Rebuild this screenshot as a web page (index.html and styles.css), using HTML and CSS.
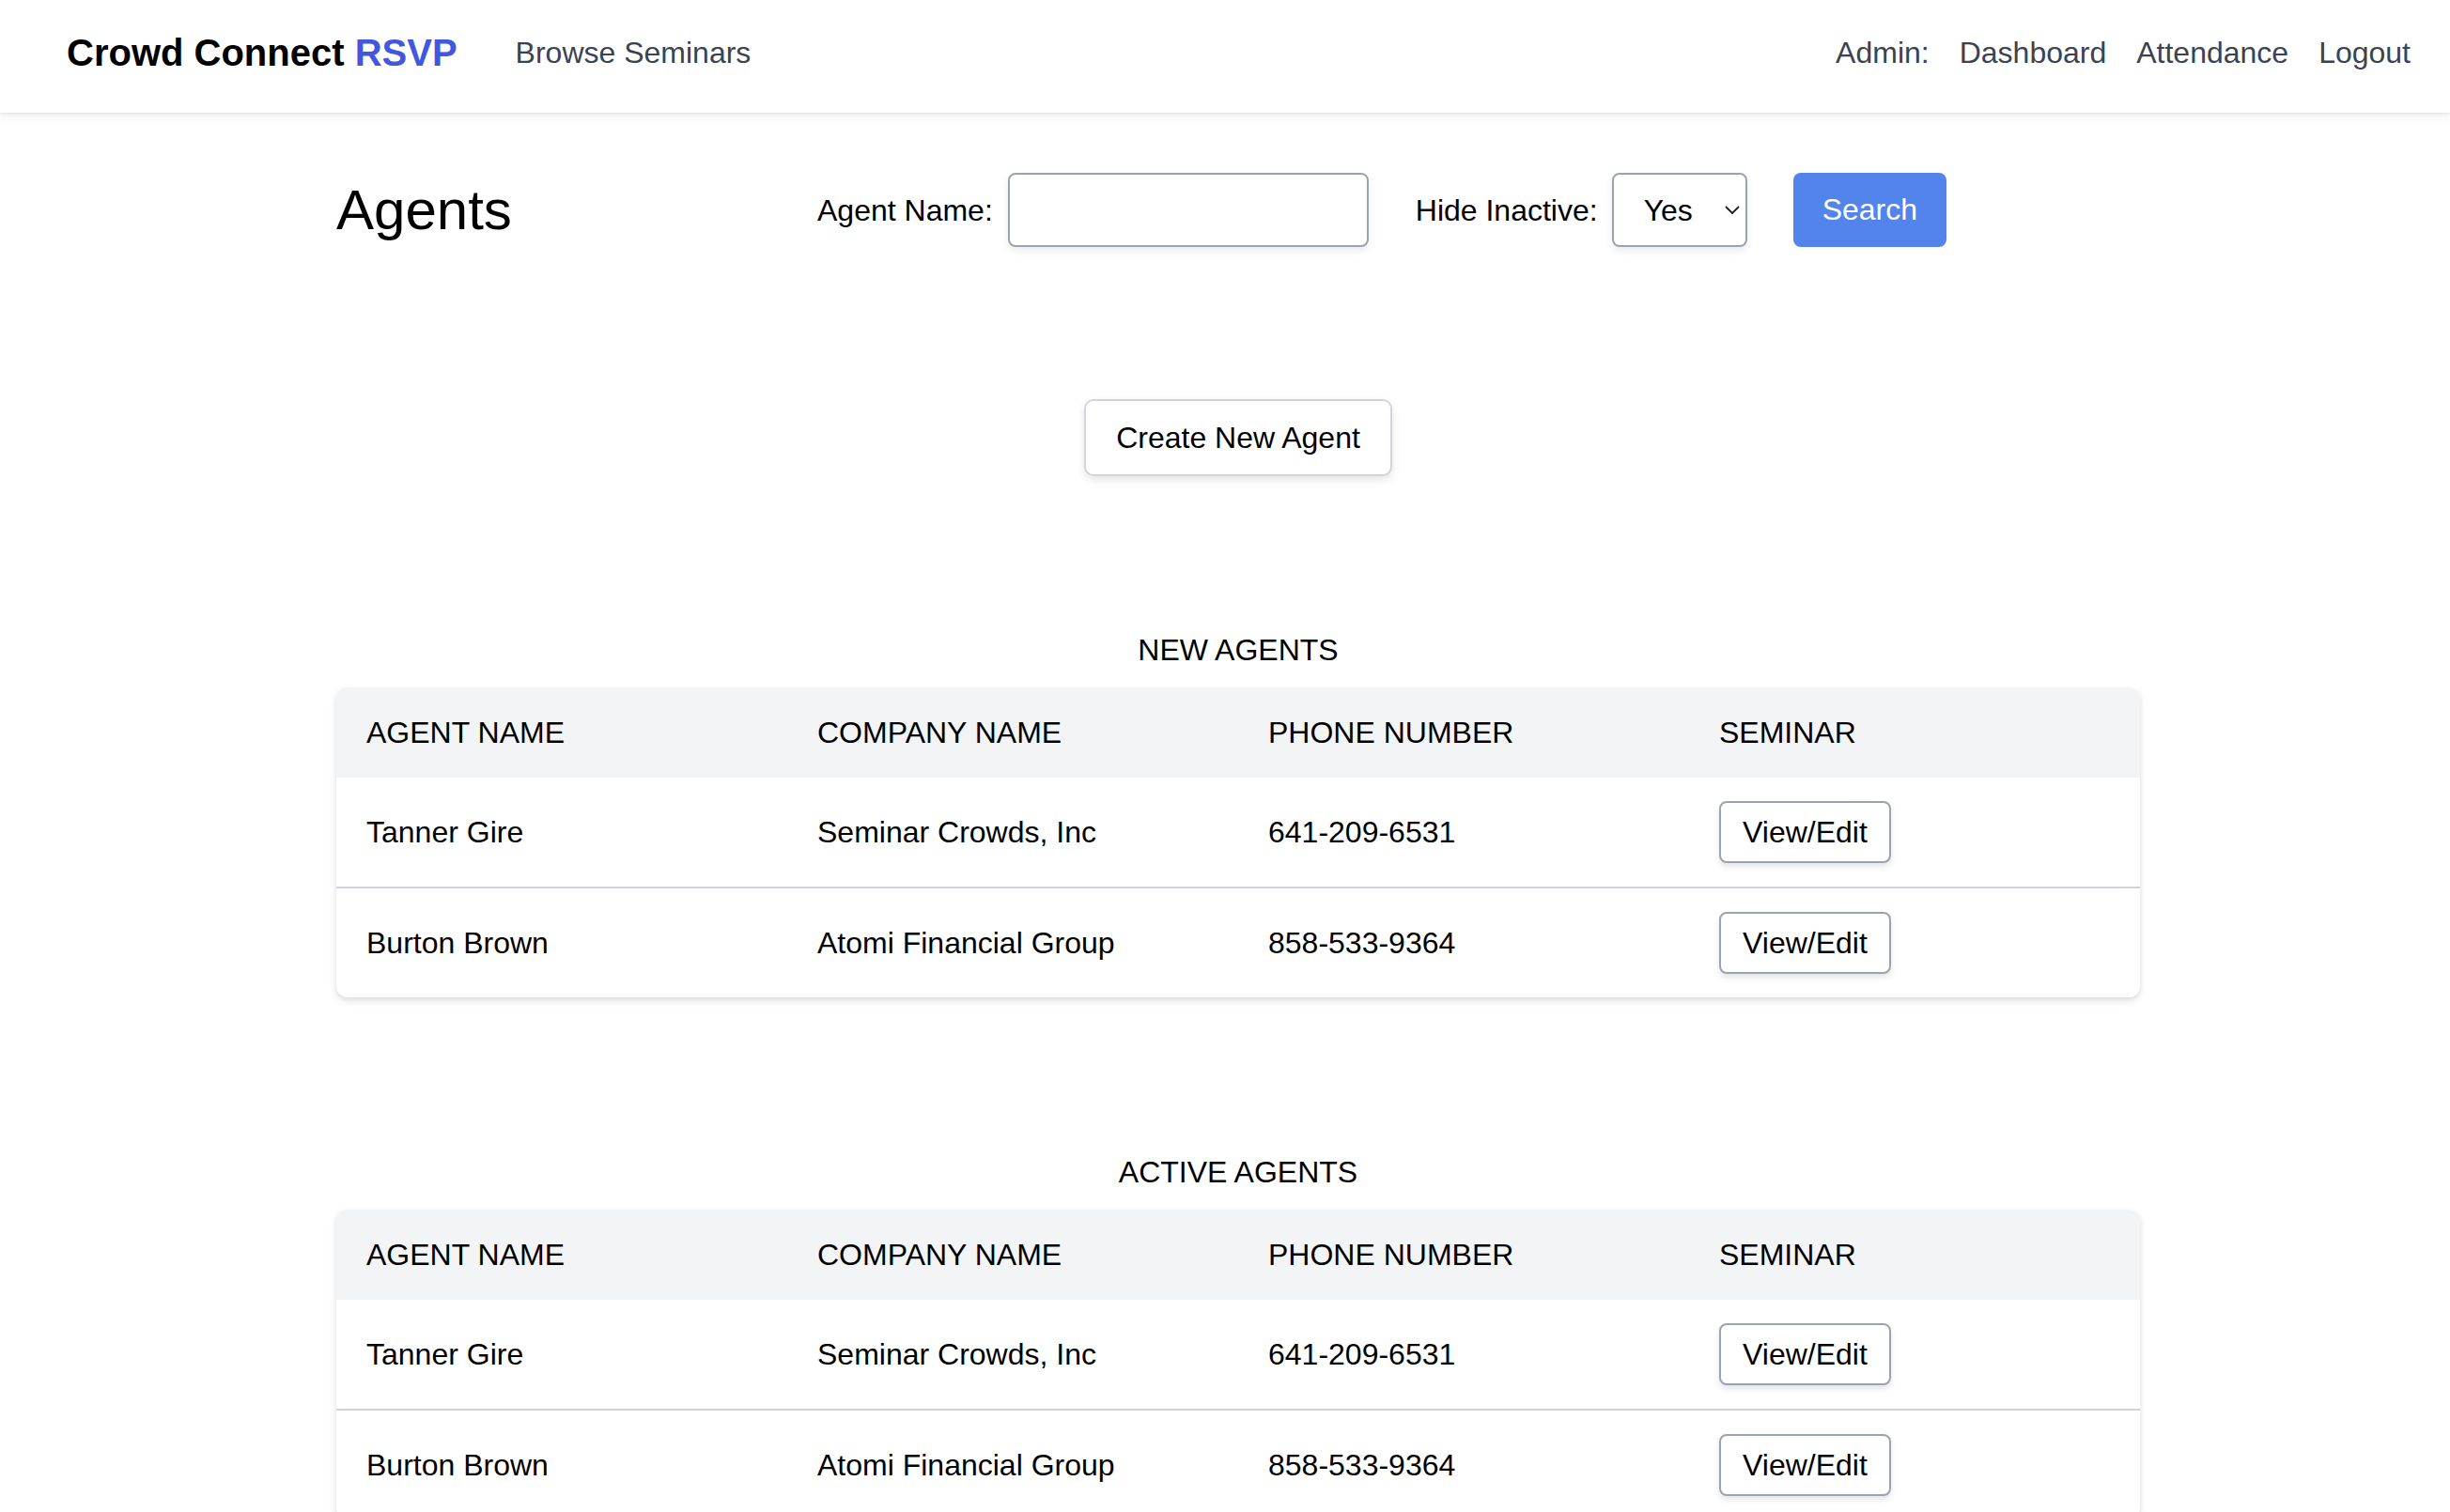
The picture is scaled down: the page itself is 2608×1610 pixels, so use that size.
FILE: index.html
```html
<!DOCTYPE html>
<html lang="en">
<head>
<meta charset="utf-8">
<title>Agents - Crowd Connect RSVP</title>
<link rel="stylesheet" href="styles.css">
</head>
<body>
<nav class="topnav">
  <a class="brand" href="#">Crowd Connect <span class="brand-accent">RSVP</span></a>
  <a class="nav-link browse" href="#">Browse Seminars</a>
  <div class="nav-right">
    <span class="nav-label">Admin:</span>
    <a class="nav-link" href="#">Dashboard</a>
    <a class="nav-link" href="#">Attendance</a>
    <a class="nav-link" href="#">Logout</a>
  </div>
</nav>

<main class="container">
  <div class="search-row">
    <h1 class="page-title">Agents</h1>
    <label class="field-label" for="agent-name">Agent Name:</label>
    <input class="text-input" id="agent-name" type="text">
    <label class="field-label hide-label" for="hide-inactive">Hide Inactive:</label>
    <div class="select-wrap">
      <select class="select-input" id="hide-inactive">
        <option>Yes</option>
        <option>No</option>
      </select>
      <svg class="chevron" width="16" height="10" viewBox="0 0 16 10"><polyline points="1.5,1.5 8,8 14.5,1.5" fill="none" stroke="#222" stroke-width="1.8" stroke-linecap="round" stroke-linejoin="round"/></svg>
    </div>
    <button class="search-btn" type="button">Search</button>
  </div>

  <div class="create-row">
    <button class="create-btn" type="button">Create New Agent</button>
  </div>

  <section class="agents-section">
    <h2 class="section-title">NEW AGENTS</h2>
    <div class="agent-table">
      <div class="trow thead">
        <div class="cell">AGENT NAME</div>
        <div class="cell">COMPANY NAME</div>
        <div class="cell">PHONE NUMBER</div>
        <div class="cell">SEMINAR</div>
      </div>
      <div class="trow">
        <div class="cell">Tanner Gire</div>
        <div class="cell">Seminar Crowds, Inc</div>
        <div class="cell">641-209-6531</div>
        <div class="cell"><button class="edit-btn" type="button">View/Edit</button></div>
      </div>
      <div class="trow">
        <div class="cell">Burton Brown</div>
        <div class="cell">Atomi Financial Group</div>
        <div class="cell">858-533-9364</div>
        <div class="cell"><button class="edit-btn" type="button">View/Edit</button></div>
      </div>
    </div>
  </section>

  <section class="agents-section">
    <h2 class="section-title">ACTIVE AGENTS</h2>
    <div class="agent-table">
      <div class="trow thead">
        <div class="cell">AGENT NAME</div>
        <div class="cell">COMPANY NAME</div>
        <div class="cell">PHONE NUMBER</div>
        <div class="cell">SEMINAR</div>
      </div>
      <div class="trow">
        <div class="cell">Tanner Gire</div>
        <div class="cell">Seminar Crowds, Inc</div>
        <div class="cell">641-209-6531</div>
        <div class="cell"><button class="edit-btn" type="button">View/Edit</button></div>
      </div>
      <div class="trow">
        <div class="cell">Burton Brown</div>
        <div class="cell">Atomi Financial Group</div>
        <div class="cell">858-533-9364</div>
        <div class="cell"><button class="edit-btn" type="button">View/Edit</button></div>
      </div>
    </div>
  </section>
</main>
</body>
</html>
```

FILE: styles.css
```css
* {
  box-sizing: border-box;
}

html, body {
  margin: 0;
  padding: 0;
  background: #ffffff;
}

body {
  font-family: "Liberation Sans", Arial, Helvetica, sans-serif;
  font-size: 32px;
  color: #000000;
}

a {
  text-decoration: none;
}

/* ---------- Top navigation ---------- */
.topnav {
  display: flex;
  align-items: center;
  height: 120px;
  padding: 0 42px 7px 71px;
  background: #ffffff;
  box-shadow: 0 1px 3px rgba(0, 0, 0, 0.10), 0 4px 12px rgba(0, 0, 0, 0.06);
  position: relative;
  z-index: 1;
}

.brand {
  font-size: 40px;
  font-weight: 700;
  color: #000000;
  white-space: nowrap;
}

.brand-accent {
  color: #4356e0;
}

.nav-link,
.nav-label {
  font-size: 32px;
  color: #3b4352;
  white-space: nowrap;
}

.browse {
  margin-left: 62px;
}

.nav-right {
  margin-left: auto;
  display: flex;
  align-items: center;
  gap: 32px;
}

/* ---------- Main container ---------- */
.container {
  max-width: 1948px;
  margin: 0 auto;
  padding-left: 28px;
}

/* ---------- Search row ---------- */
.search-row {
  display: flex;
  align-items: center;
  height: 79px;
  margin-top: 64px;
}

.page-title {
  flex: none;
  width: 512px;
  margin: 0;
  font-size: 60px;
  font-weight: 400;
  line-height: 79px;
}

.field-label {
  font-size: 32px;
  margin-right: 16px;
  padding-top: 2px;
  white-space: nowrap;
}

.hide-label {
  margin-left: 50px;
  margin-right: 15px;
}

.text-input {
  width: 384px;
  height: 79px;
  border: 2px solid #9ca3af;
  border-radius: 8px;
  background: #ffffff;
  box-shadow: 0 4px 8px rgba(0, 0, 0, 0.08);
  font-family: inherit;
  font-size: 32px;
  padding: 0 20px;
}

.select-wrap {
  position: relative;
  width: 144px;
  height: 79px;
}

.select-input {
  appearance: none;
  -webkit-appearance: none;
  width: 144px;
  height: 79px;
  border: 2px solid #9ca3af;
  border-radius: 8px;
  background: #ffffff;
  box-shadow: 0 4px 8px rgba(0, 0, 0, 0.08);
  font-family: inherit;
  font-size: 32px;
  color: #000000;
  padding: 0 0 0 32px;
}

.chevron {
  position: absolute;
  left: 120px;
  top: 35px;
  pointer-events: none;
}

.search-btn {
  margin-left: 49px;
  height: 79px;
  padding: 0 31px;
  border: none;
  border-radius: 8px;
  background: #5284ec;
  color: #ffffff;
  font-family: inherit;
  font-size: 32px;
}

/* ---------- Create button ---------- */
.create-row {
  display: flex;
  justify-content: center;
  margin-top: 162px;
}

.create-btn {
  height: 82px;
  padding: 0 32px;
  border: 2px solid #d1d5db;
  border-radius: 10px;
  background: #ffffff;
  box-shadow: 0 4px 10px rgba(0, 0, 0, 0.10);
  font-family: inherit;
  font-size: 32px;
  color: #000000;
}

/* ---------- Agent sections ---------- */
.agents-section {
  margin-top: 162px;
}

.agents-section + .agents-section {
  margin-top: 163px;
}

.section-title {
  margin: 0 0 16px;
  font-size: 32px;
  font-weight: 400;
  line-height: 47px;
  text-align: center;
}

.agent-table {
  border-radius: 12px;
  overflow: hidden;
  background: #ffffff;
  box-shadow: 0 4px 8px rgba(0, 0, 0, 0.10), 0 2px 4px rgba(0, 0, 0, 0.06);
}

.trow {
  display: grid;
  grid-template-columns: repeat(4, 1fr);
  align-items: center;
  height: 116px;
  box-sizing: content-box;
}

.trow + .trow {
  border-top: 2px solid #d1d5db;
}

.trow.thead {
  height: 96px;
  background: #f3f4f6;
}

.trow.thead + .trow {
  border-top: none;
}

.cell {
  padding-left: 32px;
  white-space: nowrap;
}

.edit-btn {
  height: 66px;
  padding: 0 23px;
  border: 2px solid #9ca3af;
  border-radius: 8px;
  background: #ffffff;
  box-shadow: 0 4px 6px rgba(0, 0, 0, 0.10);
  font-family: inherit;
  font-size: 32px;
  color: #000000;
}
```
